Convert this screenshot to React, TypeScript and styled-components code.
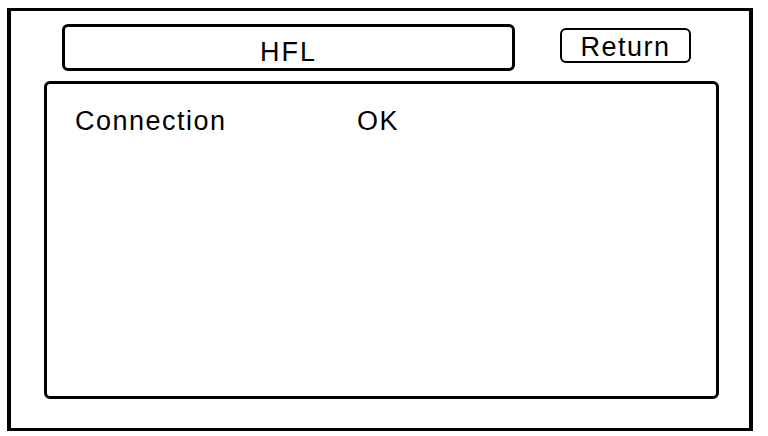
import React from 'react';
import styled, { createGlobalStyle } from 'styled-components';

interface StatusItem {
  label: string;
  value: string;
}

const items: StatusItem[] = [{ label: 'Connection', value: 'OK' }];

const App: React.FC = () => {
  return (
    <>
      <GlobalStyle />
      <Screen>
        <Header>
          <TitleBox>HFL</TitleBox>
          <ReturnButton type="button">Return</ReturnButton>
        </Header>
        <Panel>
          {items.map(item => (
            <Row key={item.label}>
              <Label>{item.label}</Label>
              <Value>{item.value}</Value>
            </Row>
          ))}
        </Panel>
      </Screen>
    </>
  );
};

export default App;

// Styled components

const GlobalStyle = createGlobalStyle`
  html, body {
    margin: 0;
    padding: 0;
    background: #fff;
  }
  body {
    font-family: "Liberation Sans", Arial, sans-serif;
    color: #000;
  }
`;

const Screen = styled.div`
  box-sizing: border-box;
  width: 746px;
  height: 423px;
  margin: 8px 0 0 7px;
  border-style: solid;
  border-color: #000;
  border-width: 3px 4px;
  padding: 13px 0 0 33px;
  display: flex;
  flex-direction: column;
`;

const Header = styled.div`
  display: flex;
  align-items: flex-start;
  padding-left: 18px;
`;

const TitleBox = styled.div`
  box-sizing: border-box;
  width: 453px;
  height: 47px;
  border: 3px solid #000;
  border-radius: 6px;
  padding-top: 12px;
  text-align: center;
  font-size: 27px;
  line-height: 27px;
  letter-spacing: 2px;
`;

const ReturnButton = styled.button`
  box-sizing: border-box;
  width: 131px;
  height: 35px;
  margin: 4px 0 0 45px;
  padding: 4px 0 0;
  border: 2px solid #000;
  border-radius: 6px;
  background: #fff;
  color: #000;
  font-family: "Liberation Sans", Arial, sans-serif;
  font-size: 27px;
  line-height: 27px;
  letter-spacing: 1.5px;
  text-align: center;
  align-self: flex-start;
  display: block;
`;

const Panel = styled.div`
  box-sizing: border-box;
  width: 675px;
  height: 318px;
  margin-top: 10px;
  border: 3px solid #000;
  border-radius: 6px;
  padding: 24px 0 0 28px;
`;

const Row = styled.div`
  display: grid;
  grid-template-columns: 282px auto;
  font-size: 27px;
  line-height: 27px;
  letter-spacing: 1.5px;
`;

const Label = styled.span``;

const Value = styled.span``;
